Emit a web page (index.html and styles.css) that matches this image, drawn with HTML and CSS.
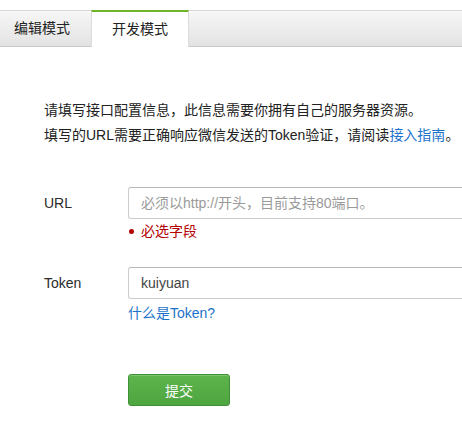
FILE: index.html
```html
<!DOCTYPE html>
<html lang="zh">
<head>
<meta charset="utf-8">
<link rel="stylesheet" href="styles.css">
</head>
<body>
<div class="page">
  <div class="tabs">
    <div class="tab">编辑模式</div>
    <div class="tab active">开发模式</div>
  </div>
  <div class="content">
    <div class="intro">
      <p>请填写接口配置信息，此信息需要你拥有自己的服务器资源。</p>
      <p>填写的URL需要正确响应微信发送的Token验证，请阅读<a class="link" href="#">接入指南</a>。</p>
    </div>
    <div class="field field-url">
      <div class="row">
        <label class="label">URL</label>
        <input class="input" type="text" placeholder="必须以http://开头，目前支持80端口。">
      </div>
      <div class="help error"><span class="dot"></span>必选字段</div>
    </div>
    <div class="field field-token">
      <div class="row">
        <label class="label">Token</label>
        <input class="input" type="text" value="kuiyuan">
      </div>
      <div class="help"><a class="link" href="#">什么是Token?</a></div>
    </div>
    <div class="actions">
      <button class="btn" type="button">提交</button>
    </div>
  </div>
</div>
</body>
</html>
```

FILE: styles.css
```css
html, body {
  margin: 0;
  padding: 0;
  background: #fff;
  overflow: hidden;
}
body {
  font-family: "Liberation Sans", "Noto Sans CJK SC", sans-serif;
  font-size: 14px;
  color: #222;
}
.page {
  padding-top: 10px;
}
.tabs {
  display: flex;
  height: 35px;
  border-top: 1px solid #d6d6d6;
  border-bottom: 1px solid #cacaca;
  background: linear-gradient(#f6f6f6, #e3e3e3);
  box-shadow: inset 0 1px 0 #fbfbfb;
}
.tab {
  width: 77px;
  padding-left: 14px;
  line-height: 35px;
  color: #222;
}
.tab.active {
  width: 96px;
  padding-left: 0;
  text-align: center;
  background: #fff;
  margin-top: -1px;
  margin-bottom: -1px;
  height: 35px;
  line-height: 35px;
  border-top: 2px solid #6fb52c;
  border-left: 1px solid #dcdcdc;
  border-right: 1px solid #dcdcdc;
}
.content {
  padding-left: 44px;
}
.intro {
  padding-top: 51px;
}
.intro p {
  margin: 0;
  line-height: 25px;
  white-space: nowrap;
}
.link {
  color: #1c73c9;
  text-decoration: none;
}
.field-url {
  margin-top: 39px;
}
.field-token {
  margin-top: 26px;
}
.row {
  display: flex;
  align-items: center;
}
.label {
  flex: 0 0 84px;
  width: 84px;
  color: #2a2a2a;
}
.input {
  box-sizing: border-box;
  flex: 1 1 auto;
  min-width: 0;
  height: 32px;
  margin: 0;
  padding: 0 12px;
  border: 1px solid #cccccc;
  border-top-color: #b9b9b9;
  border-right: none;
  border-radius: 3px 0 0 3px;
  font-family: "Liberation Sans", "Noto Sans CJK SC", sans-serif;
  font-size: 14px;
  color: #444;
  outline: none;
  background: #fff;
}
.input::placeholder {
  color: #9a9a9a;
}
.help {
  margin-left: 84px;
  margin-top: 4px;
  line-height: 20px;
}
.help.error {
  margin-top: 2px;
}
.error {
  color: #b30000;
  display: flex;
  align-items: center;
}
.dot {
  width: 5px;
  height: 5px;
  border-radius: 50%;
  background: #b30000;
  margin: 0 7px 0 1px;
}
.actions {
  margin-top: 51px;
  padding-left: 84px;
}
.btn {
  width: 102px;
  height: 32px;
  border: 1px solid #3f9233;
  border-radius: 3px;
  background: linear-gradient(#5db44c, #4ea641);
  color: #fff;
  font-family: "Liberation Sans", "Noto Sans CJK SC", sans-serif;
  font-size: 14px;
  padding: 0;
  box-shadow: inset 0 1px 0 rgba(255,255,255,0.2);
}
```
